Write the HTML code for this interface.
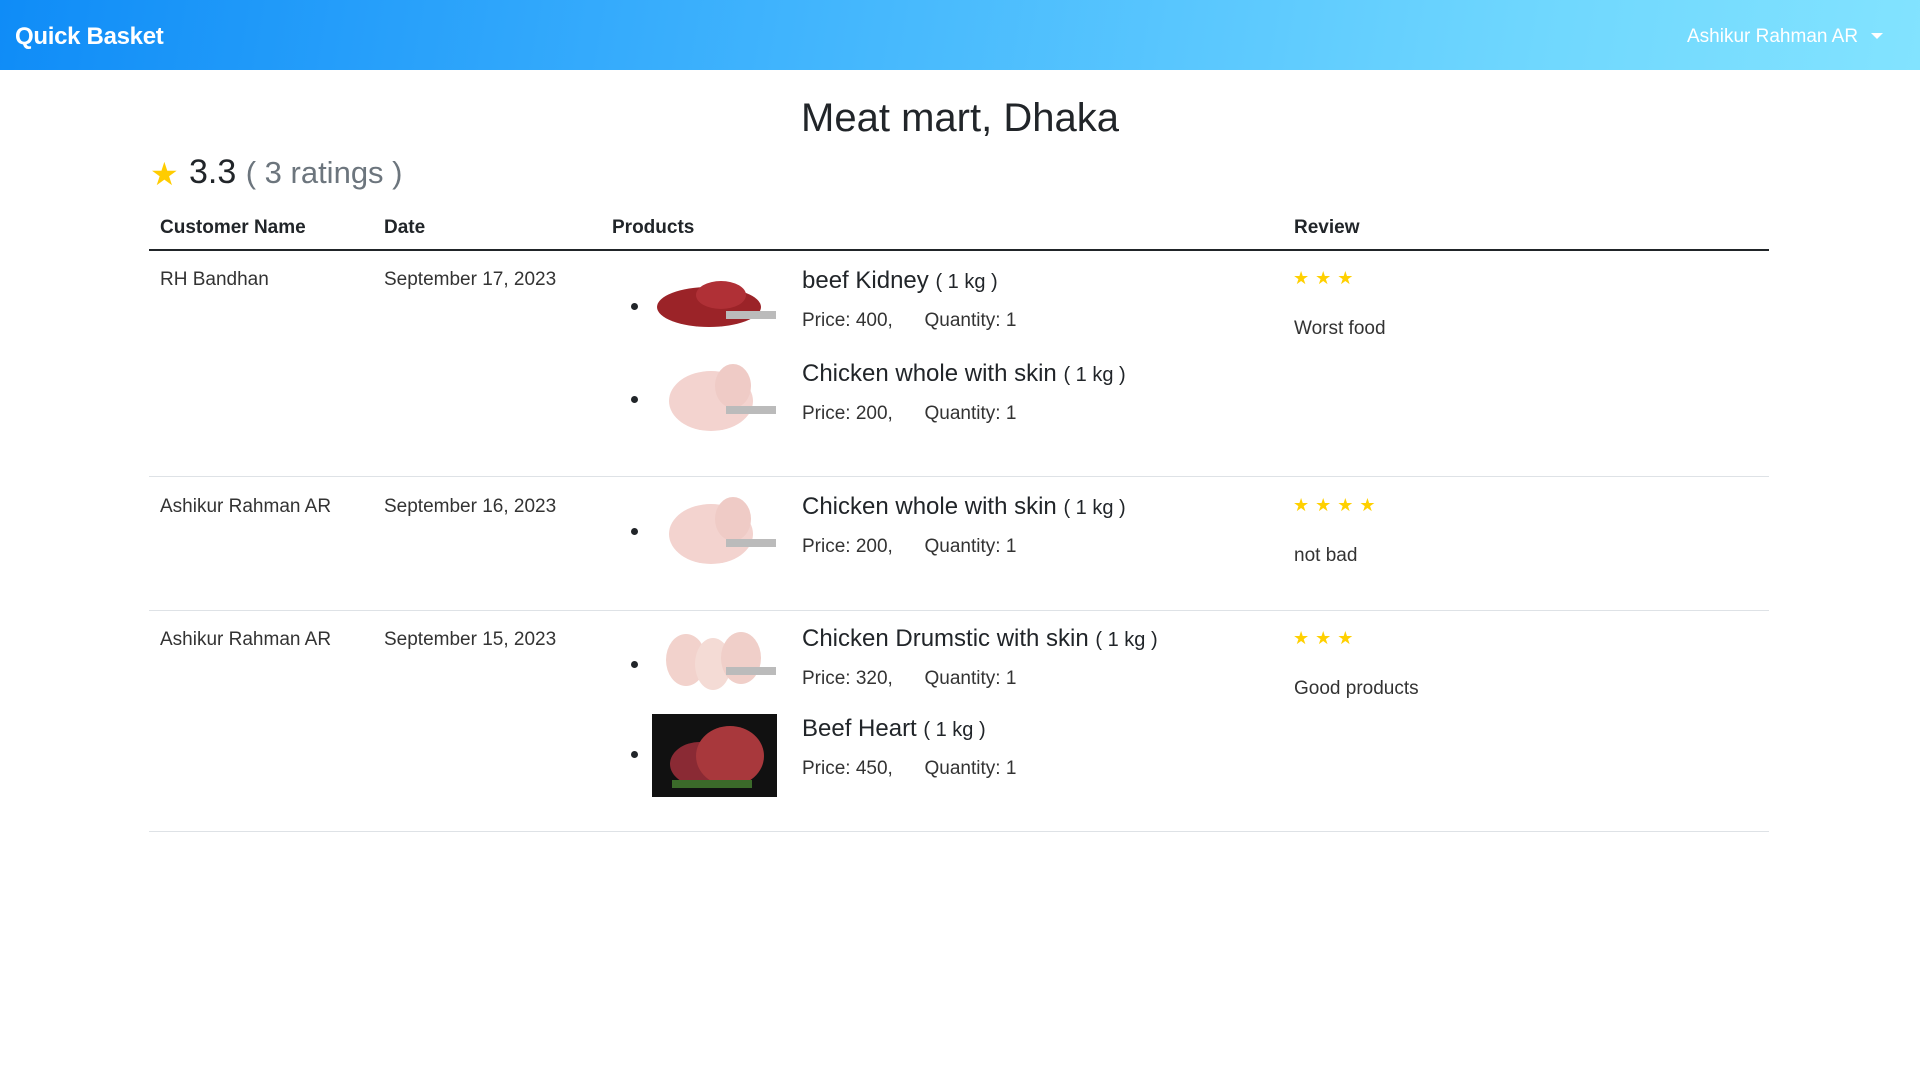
<!DOCTYPE html>
<html><head><meta charset="utf-8"><style>
*{box-sizing:border-box;margin:0;padding:0}
body{width:1920px;height:1080px;background:#fff;font-family:"Liberation Sans",sans-serif;color:#212529;position:relative;overflow:hidden}
.nav{position:absolute;left:0;top:0;width:1920px;height:70px;background:linear-gradient(100deg,#0f8cf7 0%,#3fb3fd 40%,#6fd7fe 80%,#82e3ff 100%)}
.brand{position:absolute;left:15px;top:23px;color:#fff;font-weight:bold;font-size:24px;letter-spacing:-0.3px}
.user{position:absolute;left:1687px;top:26px;color:#fff;font-size:19px}
.caret{position:absolute;left:1871px;top:33px;width:0;height:0;border-left:6px solid transparent;border-right:6px solid transparent;border-top:6px solid #fff}
.a{position:absolute;white-space:nowrap}
.hr{position:absolute;left:149px;width:1620px;height:1px;background:#dee2e6}
.th{font-weight:bold;font-size:19px;top:217px}
.td{font-size:19px;color:#333}
.pn{font-size:24px;color:#212529}
.pn small{font-size:20px}
.pr{font-size:19px;color:#333}
.dot{position:absolute;width:7px;height:7px;border-radius:50%;background:#212529}
.st{color:#ffd000;font-size:18px;letter-spacing:6px}
.img{position:absolute;width:125px;height:83px}
</style></head><body>
<div class="nav"><div class="brand">Quick Basket</div><div class="user">Ashikur Rahman AR</div><div class="caret"></div></div>
<div class="a" style="left:0;width:1920px;text-align:center;top:96px;font-size:40px;font-weight:500">Meat mart, Dhaka</div>
<div class="a" style="left:150px;top:155px;font-size:32px;color:#ffcc00">★</div>
<div class="a" style="left:189px;top:153px;font-size:34px">3.3 <span style="color:#6c757d;font-size:31px">( 3 ratings )</span></div>
<div class="a th" style="left:160px">Customer Name</div>
<div class="a th" style="left:384px">Date</div>
<div class="a th" style="left:612px">Products</div>
<div class="a th" style="left:1294px">Review</div>
<div class="hr" style="top:249px;height:2px;background:#212529"></div>

<!-- row1 -->
<div class="a td" style="left:160px;top:269px">RH Bandhan</div>
<div class="a td" style="left:384px;top:269px">September 17, 2023</div>
<div class="dot" style="left:631px;top:303px"></div>
<svg class="img" style="left:651px;top:265px" viewBox="0 0 125 83"><ellipse cx="58" cy="42" rx="52" ry="20" fill="#9b2328"/><ellipse cx="70" cy="30" rx="25" ry="14" fill="#b03036"/><rect x="75" y="46" width="50" height="8" fill="#bbb"/></svg>
<div class="a pn" style="left:802px;top:267px">beef Kidney <small>( 1 kg )</small></div>
<div class="a pr" style="left:802px;top:310px">Price: 400, &nbsp;&nbsp;&nbsp;&nbsp; Quantity: 1</div>
<div class="dot" style="left:631px;top:396px"></div>
<svg class="img" style="left:651px;top:356px" viewBox="0 0 125 83"><ellipse cx="60" cy="45" rx="42" ry="30" fill="#f3d3cf"/><ellipse cx="82" cy="30" rx="18" ry="22" fill="#efcbc6"/><rect x="75" y="50" width="50" height="8" fill="#bbb"/></svg>
<div class="a pn" style="left:802px;top:360px">Chicken whole with skin <small>( 1 kg )</small></div>
<div class="a pr" style="left:802px;top:403px">Price: 200, &nbsp;&nbsp;&nbsp;&nbsp; Quantity: 1</div>
<div class="a st" style="left:1293px;top:268px">★★★</div>
<div class="a td" style="left:1294px;top:318px">Worst food</div>
<div class="hr" style="top:476px"></div>

<!-- row2 -->
<div class="a td" style="left:160px;top:496px">Ashikur Rahman AR</div>
<div class="a td" style="left:384px;top:496px">September 16, 2023</div>
<div class="dot" style="left:631px;top:528px"></div>
<svg class="img" style="left:651px;top:489px" viewBox="0 0 125 83"><ellipse cx="60" cy="45" rx="42" ry="30" fill="#f3d3cf"/><ellipse cx="82" cy="30" rx="18" ry="22" fill="#efcbc6"/><rect x="75" y="50" width="50" height="8" fill="#bbb"/></svg>
<div class="a pn" style="left:802px;top:493px">Chicken whole with skin <small>( 1 kg )</small></div>
<div class="a pr" style="left:802px;top:536px">Price: 200, &nbsp;&nbsp;&nbsp;&nbsp; Quantity: 1</div>
<div class="a st" style="left:1293px;top:495px">★★★★</div>
<div class="a td" style="left:1294px;top:545px">not bad</div>
<div class="hr" style="top:610px"></div>

<!-- row3 -->
<div class="a td" style="left:160px;top:629px">Ashikur Rahman AR</div>
<div class="a td" style="left:384px;top:629px">September 15, 2023</div>
<div class="dot" style="left:631px;top:661px"></div>
<svg class="img" style="left:651px;top:622px" viewBox="0 0 125 83"><ellipse cx="35" cy="38" rx="20" ry="26" fill="#f2d2cc"/><ellipse cx="62" cy="42" rx="18" ry="26" fill="#f4dbd5"/><ellipse cx="90" cy="36" rx="20" ry="26" fill="#f0cfc9"/><rect x="75" y="45" width="50" height="8" fill="#bbb"/></svg>
<div class="a pn" style="left:802px;top:625px">Chicken Drumstic with skin <small>( 1 kg )</small></div>
<div class="a pr" style="left:802px;top:668px">Price: 320, &nbsp;&nbsp;&nbsp;&nbsp; Quantity: 1</div>
<div class="dot" style="left:631px;top:751px"></div>
<svg class="img" style="left:652px;top:714px" viewBox="0 0 125 83"><rect width="125" height="83" fill="#111"/><ellipse cx="48" cy="50" rx="30" ry="22" fill="#8a2a34"/><ellipse cx="78" cy="42" rx="34" ry="30" fill="#a8383c"/><rect x="20" y="66" width="80" height="8" fill="#3b6a2a"/></svg>
<div class="a pn" style="left:802px;top:715px">Beef Heart <small>( 1 kg )</small></div>
<div class="a pr" style="left:802px;top:758px">Price: 450, &nbsp;&nbsp;&nbsp;&nbsp; Quantity: 1</div>
<div class="a st" style="left:1293px;top:628px">★★★</div>
<div class="a td" style="left:1294px;top:678px">Good products</div>
<div class="hr" style="top:831px"></div>
</body></html>
